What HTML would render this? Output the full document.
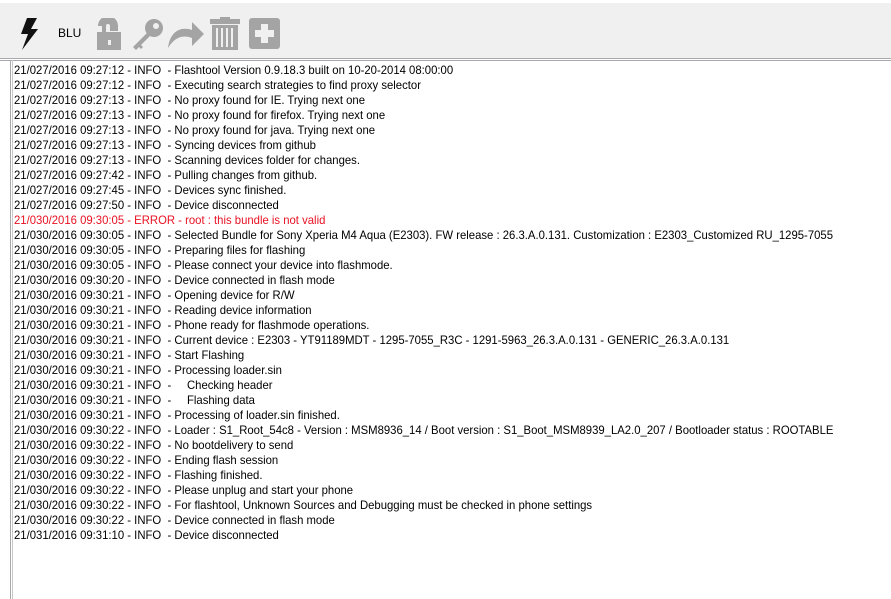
<!DOCTYPE html>
<html><head><style>
body{margin:0;width:891px;height:599px;overflow:hidden;background:#fff;font-family:"Liberation Sans",sans-serif;position:relative}
.tb{position:absolute;left:0;top:3px;width:891px;height:55px;background:#f0f0f0}
.l1{position:absolute;left:0;top:58px;width:891px;height:1px;background:#a8a8ad}
.l2{position:absolute;left:0;top:60px;width:891px;height:1px;background:#a8a8ad}
.lb{position:absolute;left:10px;top:60px;width:1px;height:539px;background:#a8a8ad}
.lb2{position:absolute;left:12px;top:60px;width:1px;height:539px;background:#c8c8c8}
.log{position:absolute;left:14px;top:63px;font-size:12px;line-height:15px;white-space:pre;color:#000;transform:scaleX(0.943);transform-origin:0 0}
.e{color:#e81123}
svg{position:absolute}
</style></head><body>
<div class="tb"></div>
<svg style="left:18px;top:18px" width="24" height="32" viewBox="0 0 24 32"><path d="M9 0h10l-6 11h7L4 32l6-16H3z" fill="#111"/></svg>
<div style="position:absolute;left:58px;top:26px;font-size:12px">BLU</div>
<svg style="left:96px;top:18px" width="26" height="32" viewBox="0 0 26 32"><path d="M4 8a8 8 0 0 1 16 0v3h-4V8a4 4 0 0 0-8 0v6" fill="none" stroke="#a4a4a4" stroke-width="4"/><rect x="1" y="14" width="24" height="18" fill="#a4a4a4"/><rect x="12" y="22" width="3" height="5" fill="#f0f0f0"/></svg>
<svg style="left:130px;top:18px" width="34" height="32" viewBox="0 0 34 32"><circle cx="24" cy="10" r="9" fill="#a4a4a4"/><circle cx="26" cy="8" r="3" fill="#f0f0f0"/><path d="M18 14L3 29l3 3 3-3 2 2 2-2-2-2 10-10z" fill="#a4a4a4"/></svg>
<svg style="left:168px;top:22px" width="36" height="26" viewBox="0 0 36 26"><path d="M0 26C2 10 12 4 24 8V0l12 12-12 12v-8C14 12 6 16 0 26z" fill="#a4a4a4"/></svg>
<svg style="left:210px;top:17px" width="30" height="33" viewBox="0 0 30 33"><rect x="0" y="2" width="30" height="5" fill="#a4a4a4"/><rect x="10" y="0" width="10" height="3" fill="#a4a4a4"/><path d="M2 8h26v25H2z" fill="#a4a4a4"/><path d="M7 11v19M12 11v19M17 11v19M22 11v19" stroke="#f0f0f0" stroke-width="2"/></svg>
<svg style="left:249px;top:18px" width="31" height="31" viewBox="0 0 31 31"><rect width="31" height="31" rx="3" fill="#a4a4a4"/><path d="M12 6h7v6h6v7h-6v6h-7v-6H6v-7h6z" fill="#f0f0f0"/></svg>
<div class="l1"></div><div class="l2"></div><div class="lb"></div><div class="lb2"></div>
<div class="log">21/027/2016 09:27:12 - INFO  - Flashtool Version 0.9.18.3 built on 10-20-2014 08:00:00
21/027/2016 09:27:12 - INFO  - Executing search strategies to find proxy selector
21/027/2016 09:27:13 - INFO  - No proxy found for IE. Trying next one
21/027/2016 09:27:13 - INFO  - No proxy found for firefox. Trying next one
21/027/2016 09:27:13 - INFO  - No proxy found for java. Trying next one
21/027/2016 09:27:13 - INFO  - Syncing devices from github
21/027/2016 09:27:13 - INFO  - Scanning devices folder for changes.
21/027/2016 09:27:42 - INFO  - Pulling changes from github.
21/027/2016 09:27:45 - INFO  - Devices sync finished.
21/027/2016 09:27:50 - INFO  - Device disconnected
<span class="e">21/030/2016 09:30:05 - ERROR - root : this bundle is not valid</span>
21/030/2016 09:30:05 - INFO  - Selected Bundle for Sony Xperia M4 Aqua (E2303). FW release : 26.3.A.0.131. Customization : E2303_Customized RU_1295-7055
21/030/2016 09:30:05 - INFO  - Preparing files for flashing
21/030/2016 09:30:05 - INFO  - Please connect your device into flashmode.
21/030/2016 09:30:20 - INFO  - Device connected in flash mode
21/030/2016 09:30:21 - INFO  - Opening device for R/W
21/030/2016 09:30:21 - INFO  - Reading device information
21/030/2016 09:30:21 - INFO  - Phone ready for flashmode operations.
21/030/2016 09:30:21 - INFO  - Current device : E2303 - YT91189MDT - 1295-7055_R3C - 1291-5963_26.3.A.0.131 - GENERIC_26.3.A.0.131
21/030/2016 09:30:21 - INFO  - Start Flashing
21/030/2016 09:30:21 - INFO  - Processing loader.sin
21/030/2016 09:30:21 - INFO  -     Checking header
21/030/2016 09:30:21 - INFO  -     Flashing data
21/030/2016 09:30:21 - INFO  - Processing of loader.sin finished.
21/030/2016 09:30:22 - INFO  - Loader : S1_Root_54c8 - Version : MSM8936_14 / Boot version : S1_Boot_MSM8939_LA2.0_207 / Bootloader status : ROOTABLE
21/030/2016 09:30:22 - INFO  - No bootdelivery to send
21/030/2016 09:30:22 - INFO  - Ending flash session
21/030/2016 09:30:22 - INFO  - Flashing finished.
21/030/2016 09:30:22 - INFO  - Please unplug and start your phone
21/030/2016 09:30:22 - INFO  - For flashtool, Unknown Sources and Debugging must be checked in phone settings
21/030/2016 09:30:22 - INFO  - Device connected in flash mode
21/031/2016 09:31:10 - INFO  - Device disconnected</div>
</body></html>
